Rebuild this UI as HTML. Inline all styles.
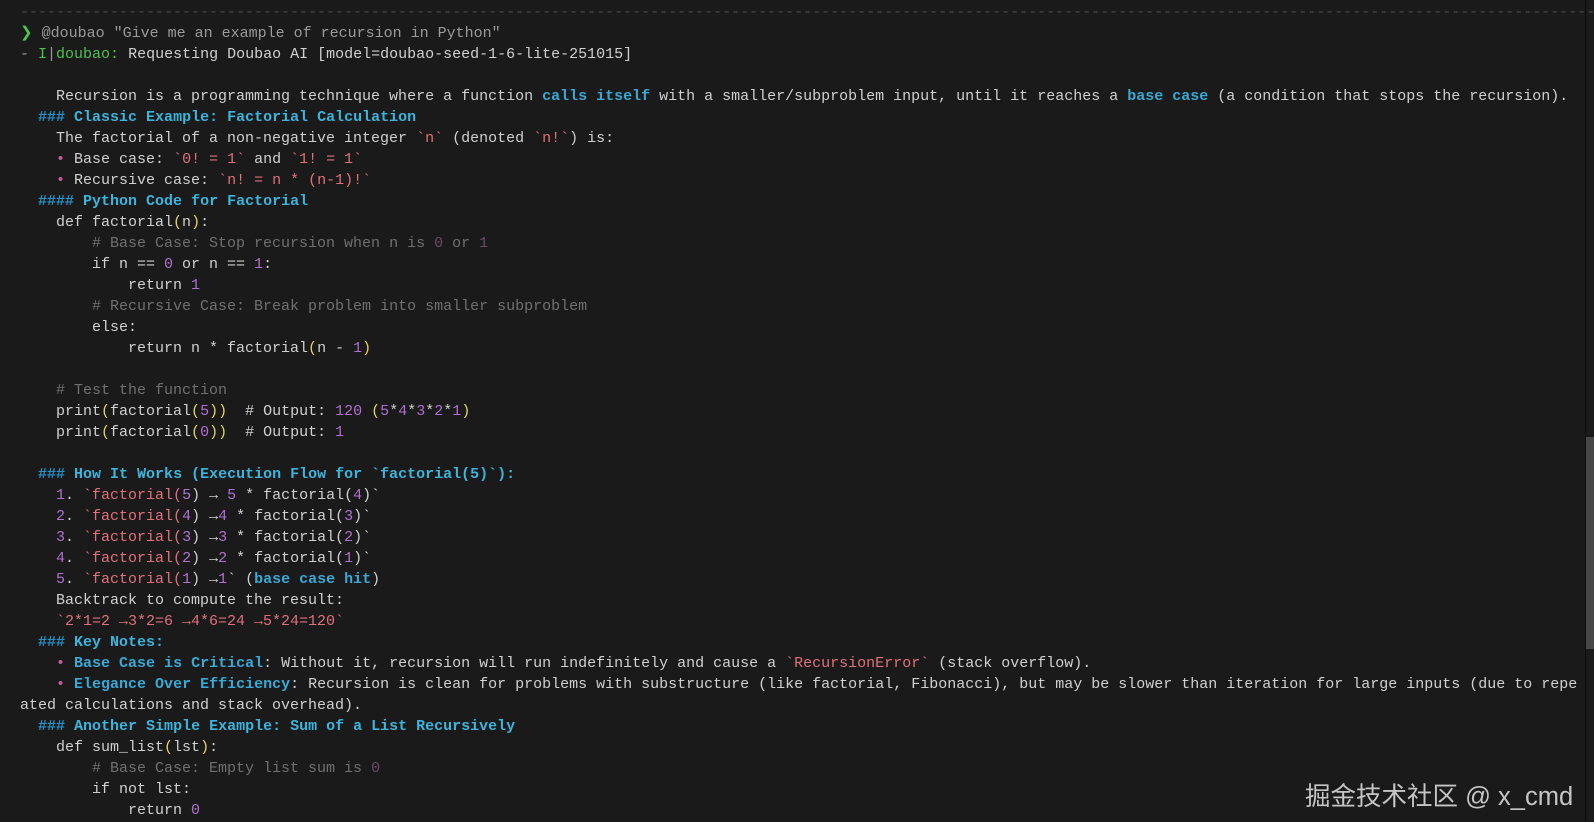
<!DOCTYPE html>
<html><head><meta charset="utf-8">
<style>
html,body{margin:0;padding:0;background:#1a1a1a;width:1594px;height:822px;overflow:hidden;}
pre{position:absolute;left:20px;top:2px;margin:0;font-family:"Liberation Mono",monospace;font-size:15px;line-height:21px;color:#d0d0d0;white-space:pre;}
.d{color:#4a4a4a}
.g{color:#4fc14f}
.gr{color:#9a9a9a}
.h{color:#2b8fc4;font-weight:bold}
.ht{color:#3db4dc;font-weight:bold}
.b{color:#3aa9d6;font-weight:bold}
.c{color:#e0707c}
.bu{color:#c0609a}
.n{color:#b070d0}
.y{color:#e6d36a}
.cm{color:#707070}
.cn{color:#6a4a62}
.sb{position:absolute;left:1585px;top:0;width:1px;height:822px;background:#0e0e0e}
.sbt{position:absolute;left:1586px;top:437px;width:8px;height:212px;background:#474747}
.wm{position:absolute;left:1305px;top:776px;font-family:"Liberation Sans","Noto Sans CJK SC",sans-serif;font-size:25.5px;color:#d8d8d8;opacity:.9;white-space:nowrap}
</style></head><body>
<pre><span class="d">-----------------------------------------------------------------------------------------------------------------------------------------------------------------------------------</span>
<span class="g">❯</span> <span class="gr">@doubao "Give me an example of recursion in Python"</span>
<span class="gr">- </span><span class="g">I</span><span class="gr">|</span><span class="g">doubao:</span> Requesting Doubao AI [model=doubao-seed-1-6-lite-251015]

    Recursion is a programming technique where a function <span class="b">calls itself</span> with a smaller/subproblem input, until it reaches a <span class="b">base case</span> (a condition that stops the recursion).
  <span class="h">###</span> <span class="ht">Classic Example: Factorial Calculation</span>
    The factorial of a non-negative integer <span class="c">`n`</span> (denoted <span class="c">`n!`</span>) is:
    <span class="bu">•</span> Base case: <span class="c">`0! = 1`</span> and <span class="c">`1! = 1`</span>
    <span class="bu">•</span> Recursive case: <span class="c">`n! = n * (n-1)!`</span>
  <span class="h">####</span> <span class="ht">Python Code for Factorial</span>
    def factorial<span class="y">(</span>n<span class="y">)</span>:
        <span class="cm"># Base Case: Stop recursion when n is </span><span class="cn">0</span><span class="cm"> or </span><span class="cn">1</span>
        if n == <span class="n">0</span> or n == <span class="n">1</span>:
            return <span class="n">1</span>
        <span class="cm"># Recursive Case: Break problem into smaller subproblem</span>
        else:
            return n * factorial<span class="y">(</span>n - <span class="n">1</span><span class="y">)</span>

    <span class="cm"># Test the function</span>
    print<span class="y">(</span>factorial<span class="y">(</span><span class="n">5</span><span class="y">))</span>  # Output: <span class="n">120</span> <span class="y">(</span><span class="n">5</span>*<span class="n">4</span>*<span class="n">3</span>*<span class="n">2</span>*<span class="n">1</span><span class="y">)</span>
    print<span class="y">(</span>factorial<span class="y">(</span><span class="n">0</span><span class="y">))</span>  # Output: <span class="n">1</span>

  <span class="h">###</span> <span class="ht">How It Works (Execution Flow for `factorial(5)`):</span>
    <span class="n">1</span>. <span class="c">`factorial(</span><span class="n">5</span>) → <span class="n">5</span> * factorial(<span class="n">4</span>)`
    <span class="n">2</span>. <span class="c">`factorial(</span><span class="n">4</span>) →<span class="n">4</span> * factorial(<span class="n">3</span>)`
    <span class="n">3</span>. <span class="c">`factorial(</span><span class="n">3</span>) →<span class="n">3</span> * factorial(<span class="n">2</span>)`
    <span class="n">4</span>. <span class="c">`factorial(</span><span class="n">2</span>) →<span class="n">2</span> * factorial(<span class="n">1</span>)`
    <span class="n">5</span>. <span class="c">`factorial(</span><span class="n">1</span>) →<span class="n">1</span>` (<span class="b">base case hit</span>)
    Backtrack to compute the result:
    <span class="c">`2*1=2 →3*2=6 →4*6=24 →5*24=120`</span>
  <span class="h">###</span> <span class="ht">Key Notes:</span>
    <span class="bu">•</span> <span class="b">Base Case is Critical</span>: Without it, recursion will run indefinitely and cause a <span class="c">`RecursionError`</span> (stack overflow).
    <span class="bu">•</span> <span class="b">Elegance Over Efficiency</span>: Recursion is clean for problems with substructure (like factorial, Fibonacci), but may be slower than iteration for large inputs (due to repe
ated calculations and stack overhead).
  <span class="h">###</span> <span class="ht">Another Simple Example: Sum of a List Recursively</span>
    def sum_list<span class="y">(</span>lst<span class="y">)</span>:
        <span class="cm"># Base Case: Empty list sum is </span><span class="cn">0</span>
        if not lst:
            return <span class="n">0</span></pre>
<div class="sb"></div><div class="sbt"></div>
<div class="wm">掘金技术社区 @ x_cmd</div>
</body></html>
